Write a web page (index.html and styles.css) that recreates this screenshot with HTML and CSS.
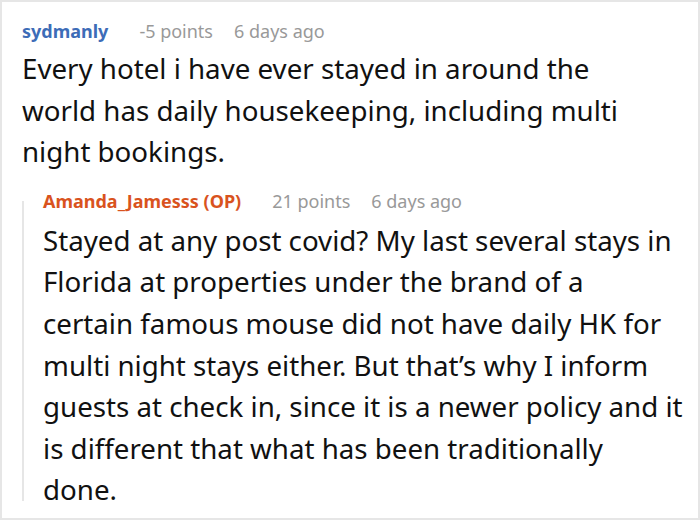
FILE: index.html
```html
<!DOCTYPE html>
<html>
<head>
    <title>Comments</title>
    <link rel="stylesheet" href="styles.css">
</head>
<body>
    <div class="frame">
        <div class="comment">
            <div class="meta">
                <span class="author">sydmanly</span>
                <span class="points">-5 points</span>
                <span class="time">6 days ago</span>
            </div>
            <p class="text">Every hotel i have ever stayed in around the world has daily housekeeping, including multi night bookings.</p>

            <div class="reply">
                <div class="meta">
                    <span class="author op">Amanda_Jamesss (OP)</span>
                    <span class="points">21 points</span>
                    <span class="time">6 days ago</span>
                </div>
                <p class="text">Stayed at any post covid? My last several stays in Florida at properties under the brand of a<br>certain famous mouse did not have daily HK for multi night stays either. But that’s why I inform guests at check in, since it is a newer policy and it is different that what has been traditionally<br>done.</p>
            </div>
        </div>
    </div>
</body>
</html>
```
FILE: styles.css
```css
body { margin: 0; font-family: "Noto Sans", "Open Sans", sans-serif; background: #fff; }
.frame { width: 700px; height: 520px; box-sizing: border-box; border: 2px solid #e6e6e6; padding: 17px 6px 0 20px; overflow: hidden; }
.meta { display: flex; gap: 21px; font-size: 18px; line-height: 24px; color: #999; }
.author { font-weight: bold; color: #3d6cb7; margin-right: 10px; }
.author.op { color: #d9531e; }
.text { margin: 5px 0 0; max-width: 630px; font-size: 27.7px; line-height: 41.6px; color: #111; }
.reply { position: relative; margin-top: 16px; padding-left: 21px; }
.reply::before { content: ""; position: absolute; left: 0; top: 12px; bottom: 10px; width: 2px; background: #e6e6e6; }
.reply .text { margin-top: 7px; max-width: 641px; }
```
